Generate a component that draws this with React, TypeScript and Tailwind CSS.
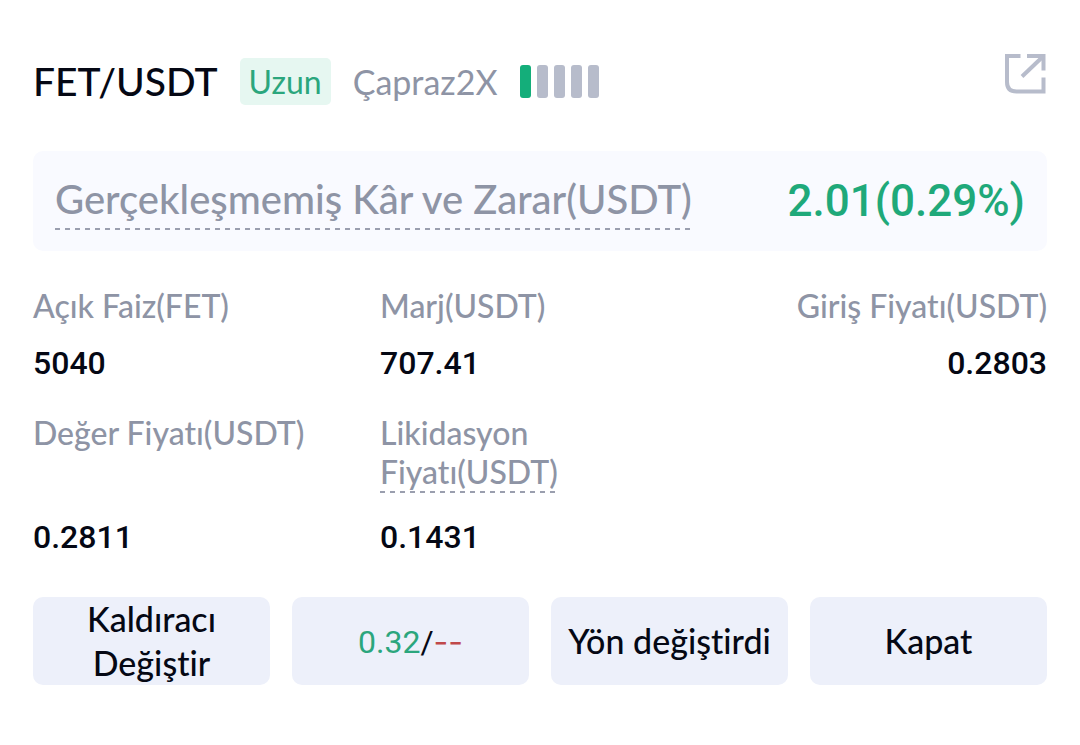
import React from 'react'
import { clsx } from 'clsx'

type Stat = {
  label: string
  value: string
  hint?: boolean
  end?: boolean
}

const stats: Stat[] = [
  { label: 'Açık Faiz(FET)', value: '5040' },
  { label: 'Marj(USDT)', value: '707.41' },
  { label: 'Giriş Fiyatı(USDT)', value: '0.2803', end: true },
  { label: 'Değer Fiyatı(USDT)', value: '0.2811' },
  { label: 'Likidasyon\nFiyatı(USDT)', value: '0.1431', hint: true },
]

const RISK_LEVEL = 1
const RISK_STEPS = 5

// 5px dash / 5px gap along the bottom edge
const dashed =
  'bg-[repeating-linear-gradient(to_right,#9a9eae_0_5px,transparent_5px_10px)] bg-[length:100%_2px] bg-bottom bg-no-repeat'

function ShareIcon() {
  return (
    <svg width="42" height="42" viewBox="0 0 42 42" fill="none" stroke="#b7bccb" strokeWidth="4" aria-hidden="true">
      <path d="M15.500 4H2V30Q2 39.500 11.500 39.500H38.500V25.500" />
      <path d="M22 4H38.500V18.500" />
      <path d="M38 4.500L17 24.500" />
    </svg>
  )
}

function RiskBars() {
  return (
    <div className="flex gap-1.5" role="img" aria-label="Risk">
      {Array.from({ length: RISK_STEPS }, (_, i) => (
        <span
          key={i}
          className={clsx('h-[33px] w-[11px] rounded-[3px]', i < RISK_LEVEL ? 'bg-[#14ae7a]' : 'bg-[#b7bccb]')}
        />
      ))}
    </div>
  )
}

function StatCell({ label, value, hint, end }: Stat) {
  return (
    <div className={clsx('flex flex-col justify-between gap-3', end ? 'items-end text-right' : 'items-start')}>
      <dt
        className={clsx(
          'text-[32px] leading-[39px] font-medium whitespace-pre-line text-[#8e94a5]',
          hint && ['mb-1.5 pb-0.5', dashed],
        )}
      >
        {label}
      </dt>
      <dd className="font-[Roboto,sans-serif] text-[32px] leading-[52px] font-medium text-[#050814]">{value}</dd>
    </div>
  )
}

function ActionButton({ children }: { children: React.ReactNode }) {
  return (
    <button
      type="button"
      className="flex h-[88px] items-center justify-center rounded-[10px] bg-[#edf0fa] px-2 text-center text-[34px] leading-[44px] font-medium text-[#050814]"
    >
      <span>{children}</span>
    </button>
  )
}

export default function App() {
  return (
    <main className="bg-white px-[33px] pt-[50px] pb-[60px] font-[Lato,sans-serif] [font-variant-ligatures:none]">
      <header className="flex items-start justify-between">
        <div className="flex h-[62px] items-center">
          <h1 className="text-[39px] leading-[48px] font-medium text-[#050814]">FET/USDT</h1>
          <span className="ml-[22px] rounded-[5px] bg-[#e6f7f1] px-[9px] text-[32px] leading-[47px] text-[#2ba67d]">
            Uzun
          </span>
          <span className="mx-[22px] text-[34px] leading-[47px] text-[#8e94a5]">Çapraz2X</span>
          <RiskBars />
        </div>
        <button type="button" aria-label="Paylaş" className="mt-[2px]">
          <ShareIcon />
        </button>
      </header>

      <section className="mt-[39px] flex h-[100px] items-center justify-between rounded-[10px] bg-[#f9faff] px-[22px]">
        <h2 className={clsx('pb-1 text-[40px] leading-[54px] font-medium text-[#8e94a5]', dashed)}>
          Gerçekleşmemiş Kâr ve Zarar(USDT)
        </h2>
        <p className="font-[Roboto,sans-serif] text-[44px] leading-[54px] font-medium text-[#1fa97a]">2.01(0.29%)</p>
      </section>

      <dl className="mt-[35px] grid grid-cols-3 gap-x-[27px] gap-y-6">
        {stats.map((stat) => (
          <StatCell key={stat.label} {...stat} />
        ))}
      </dl>

      <div className="mt-[34px] grid grid-cols-4 gap-[22px]">
        <ActionButton>Kaldıracı Değiştir</ActionButton>
        <ActionButton>
          <span className="font-[Roboto,sans-serif] text-[32px] font-normal">
            <span className="text-[#2ba67d]">0.32</span>/
            <span className="font-[Inter,sans-serif] text-[#c0494a]">--</span>
          </span>
        </ActionButton>
        <ActionButton>Yön değiştirdi</ActionButton>
        <ActionButton>Kapat</ActionButton>
      </div>
    </main>
  )
}
